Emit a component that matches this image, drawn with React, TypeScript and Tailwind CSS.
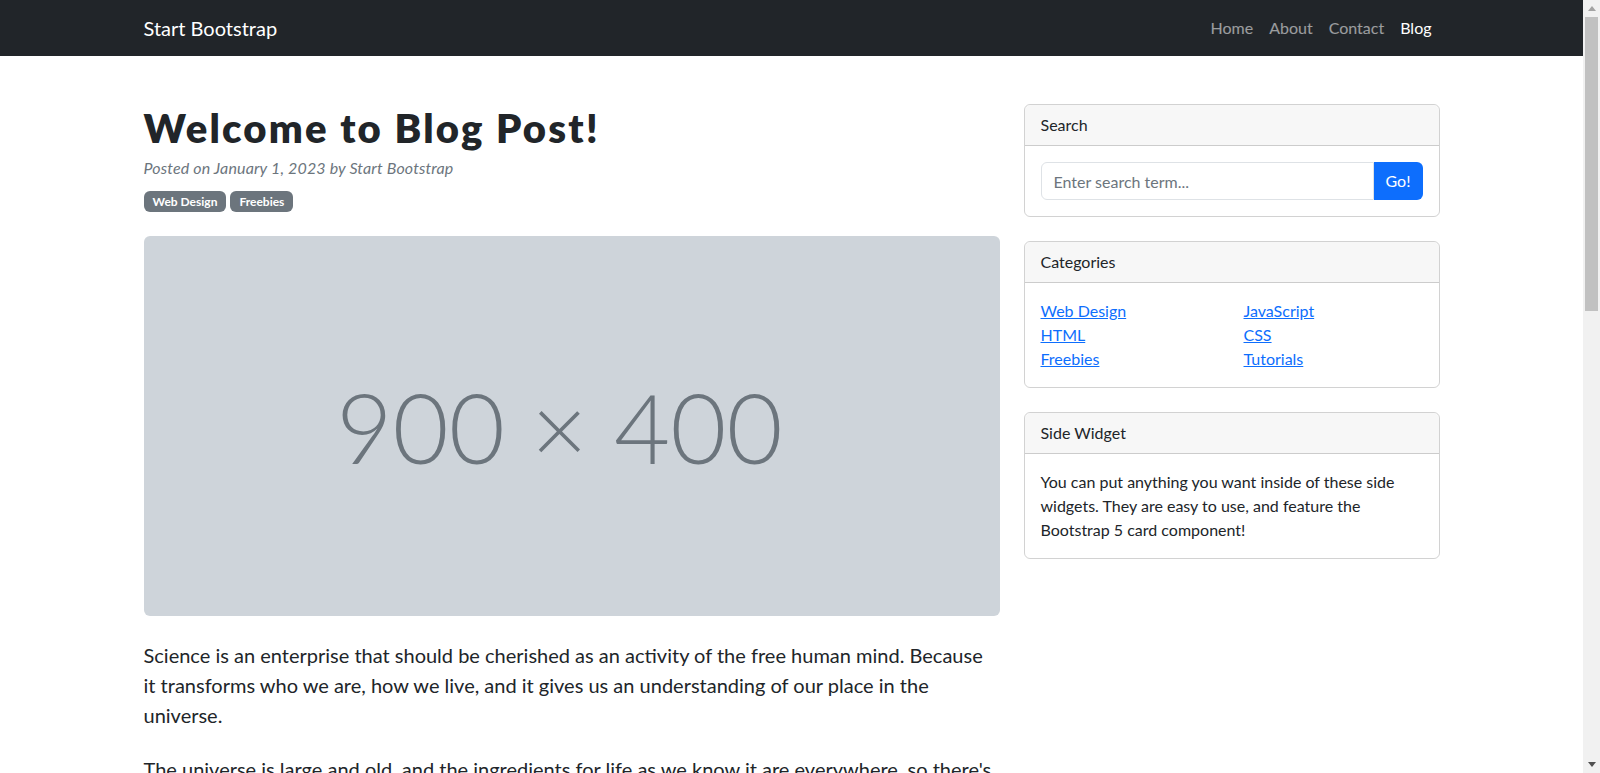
const navLinks = [
  { label: 'Home', active: false },
  { label: 'About', active: false },
  { label: 'Contact', active: false },
  { label: 'Blog', active: true },
];

const categories = ['Web Design', 'JavaScript', 'HTML', 'CSS', 'Freebies', 'Tutorials'];

function SideCard({ title, children }: { title: string; children: React.ReactNode }) {
  return (
    <div className="mb-6 rounded-md border border-black/[0.175]">
      <div className="rounded-t-md border-b border-black/[0.175] bg-black/[0.03] px-4 py-2 leading-6">{title}</div>
      <div className="p-4">{children}</div>
    </div>
  );
}

// window scrollbar, as it shows in the screenshot
function Scrollbar() {
  return (
    <div className="sticky top-0 flex h-screen w-[17px] shrink-0 flex-col self-start bg-[#f1f1f1]">
      <div className="flex h-[17px] items-center justify-center">
        <svg width="8" height="5" viewBox="0 0 8 5" aria-hidden="true">
          <path d="M4 0L8 5H0z" fill="#a3a3a3" />
        </svg>
      </div>
      <div className="mx-[2px] h-[294px] bg-[#c1c1c1]" />
      <div className="flex-1" />
      <div className="flex h-[17px] items-center justify-center">
        <svg width="8" height="5" viewBox="0 0 8 5" aria-hidden="true">
          <path d="M0 0H8L4 5z" fill="#505050" />
        </svg>
      </div>
    </div>
  );
}

export default function App() {
  return (
    <div className="flex bg-white font-[Lato,sans-serif] text-base leading-6 text-[#212529]">
      <div className="min-w-0 flex-1">
        <nav className="bg-[#212529] py-2">
          <div className="mx-auto flex w-[1320px] items-center justify-between px-3">
            <a href="#" className="py-[5px] text-xl leading-[30px] text-white">
              Start Bootstrap
            </a>
            <ul className="flex">
              {navLinks.map((l) => (
                <li key={l.label}>
                  <a href="#" className={`block px-2 py-2 ${l.active ? 'text-white' : 'text-white/55'}`}>
                    {l.label}
                  </a>
                </li>
              ))}
            </ul>
          </div>
        </nav>

        <div className="mx-auto mt-12 w-[1320px] px-3">
          <div className="flex gap-6">
            <div className="w-[856px] shrink-0">
              <article>
                <header className="mb-6">
                  <h1 className="mb-1 text-[40px] font-extrabold leading-[1.2] tracking-[2.2px]">Welcome to Blog Post!</h1>
                  <div className="mb-2 italic tracking-[0.15px] text-[#6c757d]">
                    Posted on January 1, 2023 by Start Bootstrap
                  </div>
                  <a href="#" className="mr-1 rounded-md bg-[#6c757d] px-[9px] py-[3px] text-xs font-bold text-white">
                    Web Design
                  </a>
                  <a href="#" className="rounded-md bg-[#6c757d] px-[9px] py-[3px] text-xs font-bold text-white">
                    Freebies
                  </a>
                </header>
                <figure className="mb-6">
                  <div className="flex h-[380px] items-center justify-center rounded-md bg-[#ced4da] pr-6 text-[97px] font-light leading-none text-[#6c757d]">
                    900 × 400
                  </div>
                </figure>
                <section className="mb-12 text-xl leading-[30px]">
                  <p className="mb-6">
                    Science is an enterprise that should be cherished as an activity of the free human mind. Because it
                    transforms who we are, how we live, and it gives us an understanding of our place in the universe.
                  </p>
                  <p className="mb-6">
                    The universe is large and old, and the ingredients for life as we know it are everywhere, so there's
                    no reason to think that Earth would be unique in that regard. Whether of not the life became
                    intelligent is a different question, and we'll see if we find that.
                  </p>
                  <p className="mb-6">
                    If you get asteroids about a kilometer in size, those are large enough and carry enough energy into
                    our system to disrupt transportation, communication, the food chains, and that can be a really bad
                    day on Earth.
                  </p>
                  <h2 className="mb-6 mt-12 text-[32px] font-extrabold">I have odd cosmic thoughts every day</h2>
                  <p className="mb-6">
                    For me, the most fascinating interface is Twitter. I have odd cosmic thoughts every day and I
                    realized I could hold them to myself or share them with people who might be interested.
                  </p>
                </section>
              </article>
            </div>

            <div className="w-[416px] shrink-0">
              <SideCard title="Search">
                <div className="flex">
                  <input
                    type="text"
                    placeholder="Enter search term..."
                    className="h-[38px] min-w-0 flex-1 rounded-l-md border border-[#dee2e6] px-3 text-base text-[#212529] outline-none placeholder:text-[#6c757d]"
                  />
                  <button className="h-[38px] rounded-r-md bg-[#0d6efd] px-3 text-white">Go!</button>
                </div>
              </SideCard>
              <SideCard title="Categories">
                <ul className="grid grid-cols-2 gap-x-6">
                  {categories.map((c) => (
                    <li key={c}>
                      <a href="#" className="text-[#0d6efd] underline">
                        {c}
                      </a>
                    </li>
                  ))}
                </ul>
              </SideCard>
              <SideCard title="Side Widget">
                <p>
                  You can put anything you want inside of these side widgets. They are easy to use, and feature the
                  Bootstrap 5 card component!
                </p>
              </SideCard>
            </div>
          </div>
        </div>
      </div>
      <Scrollbar />
    </div>
  );
}
